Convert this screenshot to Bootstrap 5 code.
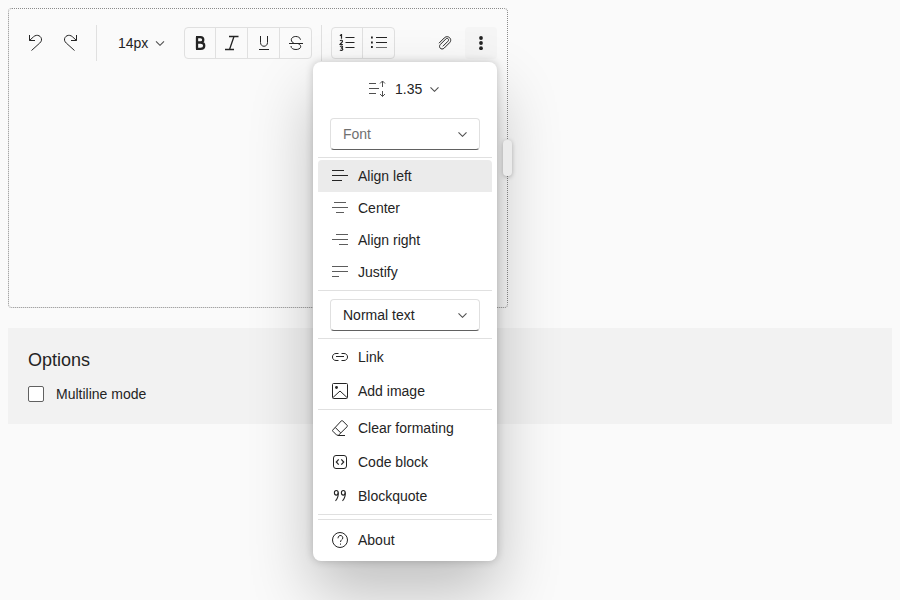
<!DOCTYPE html>
<html lang="en">
<head>
<meta charset="utf-8">
<title>Text editor</title>
<link href="https://cdn.jsdelivr.net/npm/bootstrap@5.3.0/dist/css/bootstrap.min.css" rel="stylesheet">
<style>
body{background:#fafafa;color:#242424;font:14px/20px "Liberation Sans",Arial,sans-serif;overflow:hidden;height:600px}
svg{display:block;flex:none;fill:none;stroke:#242424;stroke-width:1}
.editor{width:500px;height:300px;border:1px dotted #8a8a8a;border-radius:4px}
.tools{height:68px;padding:0 10px}
.tool{width:32px;height:32px;padding:0;border:0;border-radius:4px;color:#242424;line-height:20px}
.tool-redo{margin-left:3px;margin-right:1px}
.tool-more{background:#f5f5f5}
.vline{width:1px;height:36px;margin-left:9px;background:#e0e0e0}
.size-pick{margin-left:21px;width:66px;gap:7px}
.tool-set{border:1px solid #e0e0e0;border-radius:4px;height:32px}
.tool-set .tool{height:30px;border-radius:0;width:32px}
.tool-set .tool:first-child{width:30px}
.tool-set .tool+.tool{border-left:1px solid #e0e0e0}
.list-set{margin-left:9px}
.chev{stroke:#505050;stroke-width:1.1}
.panel-menu{left:313px;top:62px;width:184px;height:499px;padding:11px 5px 0;background:#fff;border-radius:8px;box-shadow:0 0 8px rgba(0,0,0,.2),0 32px 64px rgba(0,0,0,.24);z-index:3}
.spacing{height:32px;margin-bottom:13px;padding-left:51px;gap:9px}
.spacing svg:first-child{stroke:#505050}
.spacing .chev{margin-left:-1px}
.picker{height:32px;margin:0 12px;padding:0 12px;border:1px solid #e0e0e0;border-bottom-color:#616161;border-radius:4px}
.hint{color:#707070}
.rule{height:1px;background:#e0e0e0}
.rule-font{margin:7px 0 2px}
.rule-style{margin:2px 0 8px}
.rule-insert{margin:7px 0 1px}
.rule-blocks{margin:1px 0}
.rule-end{margin:1px 0 4px}
.rule-about{margin-bottom:3px}
.entry{height:34px;padding:0 14px;gap:10px}
.entry-s{height:32px}
.soft svg{stroke:#5c5c5c}
.chosen{background:#ebebeb;border-radius:4px 4px 0 0}
.grip{left:503px;top:140px;width:9px;height:36px;border-radius:4px;background:#ebebeb;box-shadow:0 1px 4px rgba(0,0,0,.25);z-index:4}
.options{height:96px;margin-top:20px;padding:20px;background:#f2f2f2}
.options h2{font-size:18px;line-height:24px;margin:0 0 12px;font-weight:400}
.box{width:16px;height:16px;border:1px solid #616161;border-radius:2px;background:#fff}
.gap-label{gap:12px}
</style>
<script src="https://cdn.jsdelivr.net/npm/bootstrap@5.3.0/dist/js/bootstrap.bundle.min.js"></script>
</head>
<body class="p-2 position-relative">
<main>
<section class="editor">
 <div class="tools d-flex align-items-center">
  <button class="tool btn d-flex align-items-center justify-content-center" aria-label="Undo"><svg width="16" height="20"><path d="M2.500 2v5.500H8M2.500 7.500 6.500 3.800C10 .5 15 3.200 14.500 7.200C14.300 8.500 13.500 9.300 12.700 10.100L4.500 17.500"/></svg></button>
  <button class="tool tool-redo btn d-flex align-items-center justify-content-center" aria-label="Redo"><svg width="16" height="20"><path d="M14.500 2v5.500H9M14.500 7.500 10.500 3.800C7 .5 2 3.200 2.500 7.200C2.700 8.500 3.500 9.300 4.300 10.100L12.500 17.500"/></svg></button>
  <div class="vline"></div>
  <div class="size-pick d-flex align-items-center">14px<svg class="chev" width="10" height="6"><path d="m1 1.300 4 4 4-4"/></svg></div>
  <div class="tool-set d-flex">
   <button class="tool btn d-flex align-items-center justify-content-center" aria-label="Bold"><svg width="14" height="16"><path stroke-width="2.300" d="M4 2.200v11.600M3 2.200h4.500c3.700 0 3.700 5.300 0 5.300H4.500M7.500 7.700c5 0 5 6.100 0 6.100H3"/></svg></button>
   <button class="tool btn d-flex align-items-center justify-content-center" aria-label="Italic"><svg width="16" height="16"><path stroke-width="1.300" d="M5 1.500h9.500M1 14.500h9M10 1.500l-4.500 13"/></svg></button>
   <button class="tool btn d-flex align-items-center justify-content-center" aria-label="Underline"><svg width="10" height="16"><path d="M1.500 1v6.500c0 5 7 5 7 0V1M0 14.500h10"/></svg></button>
   <button class="tool btn d-flex align-items-center justify-content-center" aria-label="Strikethrough"><svg width="14" height="16"><path d="M11.500 4.700c-.5-4.300-9-4.300-9.200 0 0 2 1.200 2.800 3.200 3.800M0 8.500h14M9 8.500c4.500 2 3 6-2 6-3 0-5-1.200-5-3.500"/></svg></button>
  </div>
  <div class="vline"></div>
  <div class="tool-set list-set d-flex">
   <button class="tool btn d-flex align-items-center justify-content-center" aria-label="Ordered list"><svg width="16" height="18"><path d="M6.500 3.500h9M6.500 8.500h9M6.500 13.500h9"/><path stroke-width="1.200" d="M.9 1.700 2.500.5v4.200M1 6.700c1-.8 2.600-.5 2.500.6C3.400 8.500 2 9 1 10.500h2.900M1 12.400c1.400-.8 2.700-.3 2.500.7-.1.800-1.100.9-1.700.9 1 0 2 .3 2 1.200 0 1.200-1.800 1.500-2.900.8"/></svg></button>
   <button class="tool btn d-flex align-items-center justify-content-center" aria-label="Bullet list"><svg width="16" height="16"><path d="M5 2.500h11M5 7.500h11"/><path stroke="#707070" d="M5 12.500h11"/><path stroke-width="1.800" d="M0 2.500h1.800M0 7.500h1.800M0 12h1.800"/></svg></button>
  </div>
  <button class="tool btn d-flex align-items-center justify-content-center ms-auto" aria-label="Attach"><svg width="16" height="16"><path d="M2 8.200 7.200 3C10.800-.6 16 4 12.600 7.700L7.300 13C4.500 15.800.8 12.200 3.400 9.400L8.700 4.100C10.500 2.300 12.600 4.400 11 6.200L5.900 11.300"/></svg></button>
  <button class="tool tool-more btn d-flex align-items-center justify-content-center ms-1" aria-label="More"><svg width="4" height="14"><g fill="#242424" stroke="none"><circle cx="2" cy="2" r="1.900"/><circle cx="2" cy="7" r="1.900"/><circle cx="2" cy="12.200" r="1.900"/></g></svg></button>
 </div>
</section>
<section class="options">
 <h2>Options</h2>
 <label class="gap-label d-flex align-items-center"><span class="box"></span><span>Multiline mode</span></label>
</section>
</main>
<div class="grip position-absolute"></div>
<div class="panel-menu position-absolute">
 <div class="spacing d-flex align-items-center"><svg width="17" height="18"><path d="M0 3.500h7M0 8.500h10M0 13.500h7M13.500 1v6M13.500 11v5.500M11 3.500l2.500-2.500 2.500 2.500M11 14l2.500 2.500 2.500-2.500"/></svg><span>1.35</span><svg class="chev" width="9" height="6"><path d="m.5 1.300 4 4 4-4"/></svg></div>
 <div class="picker d-flex align-items-center justify-content-between"><span class="hint">Font</span><svg class="chev" width="9" height="6"><path d="m.5 1.300 4 4 4-4"/></svg></div>
 <div class="rule rule-font"></div>
 <div class="entry entry-s chosen d-flex align-items-center"><svg width="16" height="16"><path d="M0 2.500h12M0 7.500h16M0 12.500h10"/></svg>Align left</div>
 <div class="entry entry-s soft d-flex align-items-center"><svg width="16" height="16"><path d="M2 2.500h12M0 7.500h16M4 12.500h8"/></svg>Center</div>
 <div class="entry entry-s soft d-flex align-items-center"><svg width="16" height="16"><path d="M4 2.500h12M0 7.500h16M7 12.500h9"/></svg>Align right</div>
 <div class="entry entry-s soft d-flex align-items-center"><svg width="16" height="16"><path d="M0 2.500h16M0 7.500h16M0 12.500h7"/></svg>Justify</div>
 <div class="rule rule-style"></div>
 <div class="picker d-flex align-items-center justify-content-between">Normal text<svg class="chev" width="9" height="6"><path d="m.5 1.300 4 4 4-4"/></svg></div>
 <div class="rule rule-insert"></div>
 <div class="entry d-flex align-items-center"><svg width="16" height="16"><path d="M6.500 4.500H4C-.7 4.500-.7 11.500 4 11.500h2.500M9.500 4.500H12c4.700 0 4.700 7 0 7H9.500M4 7.500h8"/></svg>Link</div>
 <div class="entry d-flex align-items-center"><svg width="16" height="16"><rect x=".5" y=".5" width="15" height="15" rx="1"/><path d="m1 14.500 7-6.500 7 6.500"/><circle cx="4.500" cy="4.500" r="1.400" fill="#242424" stroke="none"/></svg>Add image</div>
 <div class="rule rule-blocks"></div>
 <div class="entry d-flex align-items-center"><svg width="16" height="16"><path d="M9.400.8c.4-.4.800-.4 1.200 0l4.600 4.600c.4.400.4.800 0 1.200L6.500 15.200H4.800L.8 11.200c-.4-.4-.4-.8 0-1.200zM3.300 7.500l5.300 5.300M6 15.500h7"/></svg>Clear formating</div>
 <div class="entry d-flex align-items-center"><svg width="16" height="16"><rect x="1.500" y="1.500" width="13" height="13" rx="2.500"/><path stroke-width="1.200" d="M6.700 5.300 4.300 8l2.400 2.700M9.300 5.300 11.700 8l-2.400 2.700"/></svg>Code block</div>
 <div class="entry d-flex align-items-center"><svg width="16" height="16"><g stroke-width="1.100"><ellipse cx="4.300" cy="4.800" rx="1.900" ry="2.300"/><path d="M6.200 4.500c.3 3.500-.5 6-2.700 8.300"/><ellipse cx="11.300" cy="4.800" rx="1.900" ry="2.300"/><path d="M13.200 4.500c.3 3.500-.5 6-2.700 8.300"/></g></svg>Blockquote</div>
 <div class="rule rule-end"></div>
 <div class="rule rule-about"></div>
 <div class="entry d-flex align-items-center"><svg width="16" height="16"><circle cx="8" cy="8" r="7.500"/><path d="M6 6.300c0-3.700 4.800-3.700 4.800-.3C10.800 7.700 8.500 7.700 8.500 10M8.500 11.500v1.200"/></svg>About</div>
</div>
</body>
</html>
